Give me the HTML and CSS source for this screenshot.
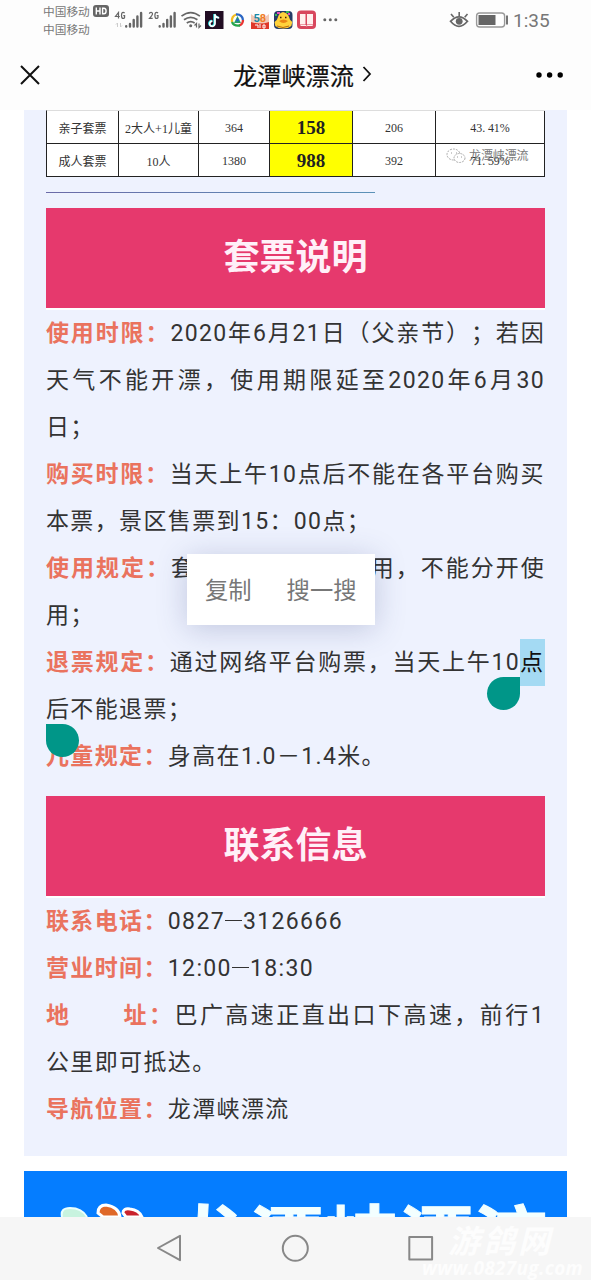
FILE: index.html
```
<!DOCTYPE html>
<html lang="zh-CN">
<head>
<meta charset="utf-8">
<title>龙潭峡漂流</title>
<link rel="stylesheet" href="styles.css">
</head>
<body>
<div class="phone">
  <header class="status">
    <div class="carriers"><div class="carrier">中国移动<svg class="hd" width="16" height="12" viewBox="0 0 16 12"><rect width="16" height="12" rx="3" fill="#666"/><path d="M3.3 2.5v7M7 2.5v7M3.3 6H7M9.6 3.2h1.3q2.2 0 2.2 2.8t-2.2 2.8H9.6z" fill="none" stroke="#fff" stroke-width="1.4"/></svg></div><div class="carrier">中国移动</div></div>
    <svg class="signals" width="88" height="24" viewBox="114 8 88 24">
      <g fill="none" stroke="#666" stroke-width="1.2"><path d="M118.5 18.5v-6l-3 4h4.3M124.6 13.2q-.6-.8-1.5-.8-1.6 0-1.6 3t1.6 3 1.5-1.4v-1.3h-1.3M149.4 13.8q0-1.4 1.6-1.4t1.5 1.6q0 1-3 4.4h3.2M158 13.2q-.6-.8-1.5-.8-1.6 0-1.6 3t1.6 3 1.5-1.4v-1.3h-1.3"/></g>
      <path d="M117.5 27v-4l-1.5 1.5M120.5 23v4l1.5-1.5" fill="none" stroke="#ccc"/>
      <g stroke="#666" stroke-width="2.4" stroke-linecap="round"><path d="M126.2 26.2v.4M130 24v2.6M133.7 20v6.6M137.4 16.500v10.100M141.100 13v13.600M159.700 26.200v.4M163.500 24v2.600M167.200 20v6.600M170.900 16.500v10.100M174.600 13v13.600"/></g>
      <g fill="none" stroke="#666" stroke-width="1.7"><path d="M181.500 16.200q9.200-7.200 18.400 0M184 19.800q6.700-5 13.400 0M186.800 23q3.900-2.800 7.800 0"/></g>
      <circle cx="190.700" cy="25.700" r="1.5" fill="#666"/><path d="M196.500 27.500v-4l-2 2M199 23.500v4l2-2" fill="none" stroke="#666" stroke-width="1.2"/>
    </svg>
    <svg class="apps" width="134" height="22" viewBox="205 9 134 22">
      <rect x="205" y="11" width="18.500" height="18" fill="#210d23"/>
      <path d="M214.300 14v9.300a2.600 2.600 0 1 1-2.500-2.500M214.300 14q.5 3.300 4.200 3.500" fill="none" stroke="#3ee" stroke-width="2"/><path d="M215 14.300v9.300a2.600 2.600 0 1 1-2.500-2.500M215 14.300q.5 3.300 4.200 3.500" fill="none" stroke="#fff" stroke-width="1.700"/>
      <g fill="none" stroke-width="2.300"><path d="M232 22q-.8-6 4.500-7.500" stroke="#f3bd22"/><path d="M236 14.500q6-.5 7 5.500" stroke="#2b66c4"/><path d="M243 20q0 4.500-4 5.500" stroke="#e83532"/><path d="M240 25.500q-6 1-8-3.500" stroke="#27a64b"/></g><path d="M237.500 16l3.500 7h-7z" fill="#27a064"/><circle cx="237.500" cy="20" r="1.500" fill="#2b66c4"/>
      <path d="M251 14l4 3h10l4-3v15h-18z" fill="#f3c9b5"/><text x="253.500" y="22" class="ico58"><tspan fill="#1689a6">5</tspan><tspan fill="#ef7c28">8</tspan></text><path d="M251 22q9 3 18 0v7h-18z" fill="#df3829"/><path d="M255 25h3v3m2-4v4m3-3h2v3h-2z" fill="none" stroke="#fff"/>
      <rect x="274" y="11" width="18.500" height="18" rx="4" fill="#253b67"/><path d="M277 13h3M288 14h2" stroke="#e34cba" stroke-width="2"/><path d="M275 15h2M286 12h3" stroke="#35b95a" stroke-width="2"/><path d="M274.500 22q3-2 3.500-5 1-4 5-5 5 1 6 5 .5 3 3.300 5l-1 4q-3 2.500-8 2.500t-8-2.500z" fill="#ffd23b"/><path d="M280 17.500h1.500M285 17.500h1.500" stroke="#492000" stroke-width="1.500"/><path d="M279 21q4.500-3 9 0-4.500 4-9 0" fill="#e98515"/><path d="M277 26q6 3 12 0" fill="none" stroke="#b66a0d"/>
      <rect x="297" y="10.500" width="19" height="18.500" rx="4" fill="#d8475e"/><path d="M300 14h5.500v10.500H300zM307 14h6v10.500h-6z" fill="#fff0ef"/><path d="M300.500 25.500h5.500l.6.700.6-.7h5.500" fill="none" stroke="#fff0ef"/>
      <g fill="#666"><circle cx="324.800" cy="19.800" r="1.500"/><circle cx="330.300" cy="19.800" r="1.500"/><circle cx="335.800" cy="19.800" r="1.500"/></g>
    </svg>
    <svg class="power" width="60" height="20" viewBox="449 10 60 20"><path d="M450.500 21.300q8.500-9 17 0-8.500 10-17 0z" fill="none" stroke="#666" stroke-width="1.700"/><circle cx="459.200" cy="21.300" r="3.400" fill="#666"/><path d="M459.200 12v4M451 14l2.800 3.300M467.500 14l-2.800 3.300" stroke="#666" stroke-width="1.600"/><rect x="476.600" y="13" width="28" height="14" rx="3" fill="#fff" stroke="#999" stroke-width="1.400"/><path d="M478.500 15h17v10h-17z" fill="#666"/><path d="M507 15.500v9" stroke="#666" stroke-width="1.800"/></svg>
    <span class="clock">1:35</span>
  </header>
  <nav class="titlebar">
    <svg class="close" width="22" height="22" viewBox="0 0 22 22"><path d="M2 2l18 18M20 2L2 20" stroke="#111" stroke-width="2"/></svg>
    <h1 class="title">龙潭峡漂流<svg width="10" height="18" viewBox="0 0 10 18"><path d="M1.500 2l6.500 7-6.500 7" fill="none" stroke="#111" stroke-width="1.800"/></svg></h1>
    <svg class="more" width="28" height="6" viewBox="0 0 28 6"><circle cx="3" cy="3" r="2.700"/><circle cx="13.600" cy="3" r="2.700"/><circle cx="24.200" cy="3" r="2.700"/></svg>
  </nav>
  <main class="viewport">
    <article class="article">
      <div class="prices">
        <div>亲子套票</div><div>2大人+1儿童</div><div>364</div><div class="deal">158</div><div>206</div><div class="pct">43. 41%</div>
        <div>成人套票</div><div>10人</div><div>1380</div><div class="deal">988</div><div>392</div><div class="pct stamped">71. 59%<span class="stamp"><svg width="20" height="16" viewBox="0 0 20 16"><g fill="#fff" stroke="#aaa" stroke-dasharray="2 1"><ellipse cx="7.500" cy="6.500" rx="6.500" ry="5.500"/><ellipse cx="13.500" cy="10" rx="5.500" ry="4.500"/></g><path d="M5 5h1M10 5h1M11 9h1M15 9h1" stroke="#999"/></svg>龙潭峡漂流</span></div>
      </div>
      <div class="rule"></div>
      <h2 class="banner">套票说明</h2>
      <section class="lines">
        <div class="line full"><b>使用时限：</b>2020年6月21日（父亲节）；若因</div>
        <div class="line full">天气不能开漂，使用期限延至2020年6月30</div>
        <div class="line">日；</div>
        <div class="line full"><b>购买时限：</b>当天上午10点后不能在各平台购买</div>
        <div class="line">本票，景区售票到15：00点；</div>
        <div class="line full"><b>使用规定：</b>套票必须一次性使用，不能分开使</div>
        <div class="line">用；</div>
        <div class="line full"><b>退票规定：</b>通过网络平台购票，当天上午10<span class="selected">点</span></div>
        <div class="line">后不能退票；</div>
        <div class="line"><b>儿童规定：</b>身高在1.0－1.4米。</div>
        <i class="handle end"></i><i class="handle start"></i>
        <div class="menu"><span>复制</span><span>搜一搜</span></div>
      </section>
      <h2 class="banner second">联系信息</h2>
      <section class="lines">
        <div class="line"><b>联系电话：</b>0827<span class="dash"></span>3126666</div>
        <div class="line"><b>营业时间：</b>12:00<span class="dash"></span>18:30</div>
        <div class="line full"><b>地<span class="gap"></span>址：</b>巴广高速正直出口下高速，前行1</div>
        <div class="line">公里即可抵达。</div>
        <div class="line"><b>导航位置：</b>龙潭峡漂流</div>
      </section>
    </article>
    <div class="poster">
      <svg class="logo" width="100" height="46" viewBox="0 0 100 46"><path d="M38 46q-2-9 8-9 12 0 17 9" fill="#c8f3df" stroke="#eaffff" stroke-width="2"/><path d="M74 42q0-8 8-8 13 2 14 12H79z" fill="#df6828" stroke="#fff" stroke-width="3"/></svg>
      <svg class="logo2" width="24" height="46" viewBox="0 0 24 46"><path d="M2 42q0-5 7-4 9 1 12 8H5z" fill="#c9222c" stroke="#fff" stroke-width="3"/></svg>
      <div class="poster-title">龙潭峡漂流</div>
    </div>
  </main>
  <footer class="keys">
    <svg class="keyicons" width="300" height="34" viewBox="150 1231 300 34"><g fill="none" stroke="#888" stroke-width="2" stroke-linejoin="round"><path d="M180 1235.800v24.400L158 1248z"/><circle cx="295.300" cy="1248.300" r="12.500"/><rect x="409.300" y="1237" width="22.800" height="22.600"/></g></svg>
    <div class="site"><span class="site-name">游鸽网</span><span class="site-url">www.0827ug.com</span></div>
  </footer>
</div>
</body>
</html>
```

FILE: styles.css
```
* { box-sizing: border-box; }
body { margin: 0; background: #fff; font-family: Roboto, "Noto Sans CJK SC", sans-serif; text-spacing-trim: space-all; }
svg { display: block; flex: none; }
.phone { width: 591px; height: 1280px; overflow: hidden; display: flex; flex-direction: column; background: #fff; }
.status { height: 40px; flex: none; display: flex; align-items: flex-start; padding-left: 43px; background: #fdfdfd; color: #777; }
.carriers { width: 71px; padding-top: 2px; }
.carrier { display: flex; align-items: center; gap: 3px; height: 17.500px; font-size: 11.700px; white-space: nowrap; }
.signals { margin-top: 8px; }
.apps { margin: 9px 0 0 3px; }
.ico58 { font: bold 11px Roboto, sans-serif; }
.power { margin: 10px 0 0 110px; }
.clock { margin: 8px 0 0 4px; font-size: 19px; line-height: 25px; color: #777; }
.titlebar { height: 70px; flex: none; display: flex; align-items: center; padding: 0 27px 0 19px; background: #fdfdfd; }
.title { margin: 0 auto 2px 192px; display: flex; align-items: center; gap: 8px; font-size: 24.200px; font-weight: 400; color: #111; -webkit-text-stroke: .2px #111; }
.viewport { flex: 1; min-height: 0; padding: 0 24px 0 23.500px; overflow: hidden; }
.article { height: 1046px; padding: 0 22px 0 22.500px; background: #eef2fe; }
.prices { height: 67px; display: grid; grid-template-columns: 72px 80px 71px 83px 83px 109px; grid-template-rows: 33px 33px; border-left: 1px solid #222; border-top: 1px solid #ddd; background: linear-gradient(#fff 0 0) no-repeat; font: 12px "Liberation Serif", "Noto Sans CJK SC", serif; color: #333; }
.prices > div { display: flex; align-items: center; justify-content: center; padding-top: 2px; border-right: 1px solid #222; border-bottom: 1px solid #222; white-space: nowrap; }
.prices > .deal { background: #ff0; font-size: 19px; font-weight: bold; color: #222; }
.prices > .pct { letter-spacing: -.1px; }
.prices > .stamped { position: relative; }
.stamp { position: absolute; left: 10px; top: 3px; display: flex; align-items: center; gap: 3px; color: #777; font-size: 12px; line-height: 18px; }
.rule { width: 329px; height: 1px; margin-top: 15px; background: linear-gradient(90deg, #6b6ba8, #5b92b8); }
.banner { height: 100px; margin: 15px 0 2px; display: flex; align-items: center; justify-content: center; padding-bottom: 8px; background: #e6396d; box-shadow: 0 2px #fff; color: #fff0f8; font-size: 36px; font-weight: bold; }
.second { margin-top: 16px; }
.lines { position: relative; }
.line { height: 47px; line-height: 48px; font-size: 23px; letter-spacing: 1.360px; white-space: nowrap; color: #333; }
.line b { color: #ea735e; }
.full { text-align: justify; text-align-last: justify; white-space: normal; }
.selected { display: inline-block; height: 47px; width: 25px; background: #a4daf3; color: #111; }
.dash { display: inline-block; width: 17px; height: 1.500px; margin: 0 1px 0 0; vertical-align: 8px; background: #333; }
.gap { display: inline-block; width: 51px; }
.handle { position: absolute; width: 33px; height: 33px; background: #009688; }
.start { left: 0; top: 414px; border-radius: 0 50% 50% 50%; }
.end { left: 441px; top: 367px; border-radius: 50% 0 50% 50%; }
.menu { position: absolute; left: 141px; top: 244px; width: 188px; height: 71px; display: flex; align-items: center; padding: 0 0 1px 18px; gap: 35px; background: #fff; color: #777; font-size: 23.300px; box-shadow: 0 4px 30px rgba(60, 70, 130, .25); }
.poster { height: 60px; margin-top: 15px; display: flex; background: #057dff; overflow: hidden; }
.logo { margin-right: -3px; }
.logo2 { margin-left: 0; margin-right: 29px; }
.poster-title { font-size: 75px; line-height: 75px; padding-top: 34px; font-weight: bold; white-space: nowrap; color: #f3ffff; -webkit-text-stroke: 1px #f3ffff; }
.keys { height: 63px; flex: none; display: flex; background: #f6f6f6; padding-left: 150px; }
.keyicons { margin-top: 14px; }
.site { margin-left: -28px; padding-top: 8px; color: #fdfdfd; font-style: italic; font-weight: bold; display: flex; flex-direction: column; }
.site-name { font-size: 32px; line-height: 34px; padding-left: 26px; letter-spacing: 3px; }
.site-url { font: bold italic 19px/18px "Open Sans", sans-serif; letter-spacing: .3px; }
```
